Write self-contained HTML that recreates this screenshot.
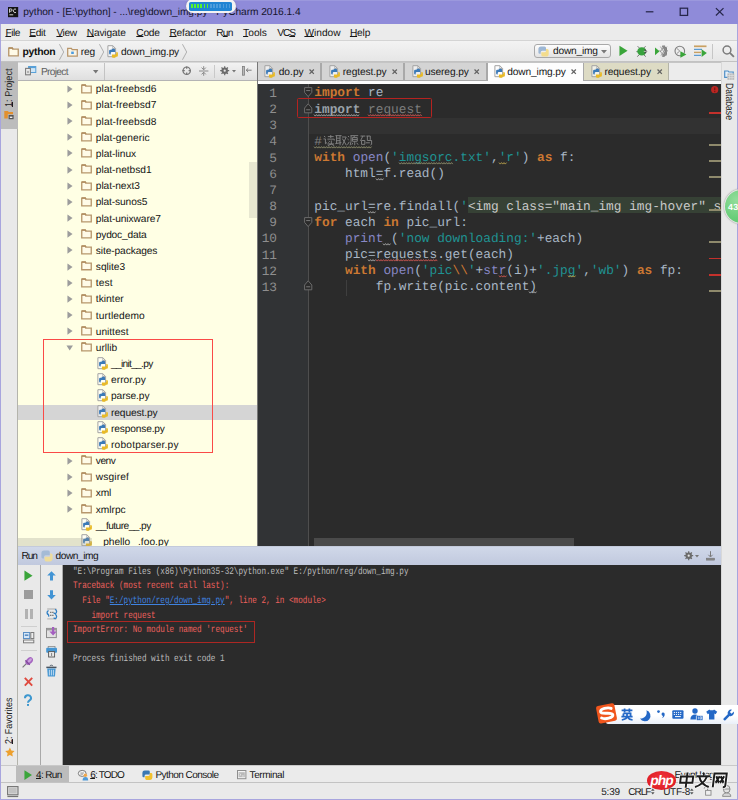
<!DOCTYPE html>
<html>
<head>
<meta charset="utf-8">
<title>python - PyCharm</title>
<style>
*{box-sizing:border-box;margin:0;padding:0}
html,body{width:738px;height:800px;overflow:hidden;background:#8f8bd9}
body{font-family:"Liberation Sans",sans-serif;font-size:10px;position:relative;text-rendering:geometricPrecision}
.x{position:absolute;white-space:pre}
svg.x{overflow:visible}
u{text-decoration-thickness:.8px;text-underline-offset:.4px}
.c{font-family:"Liberation Mono",monospace;font-size:12.8px;line-height:16px;color:#a9b7c6;letter-spacing:-.0002px}
.k{color:#cc7832}.s{color:#1f9393}.g{color:#7d7d7d}.bi{color:#8888c6}
.co{font-family:"Liberation Mono",monospace;font-size:10px;line-height:14px;transform:scaleX(.7658);transform-origin:0 0}
</style>
</head>
<body>
<div class="x" style="left:0px;top:0px;width:738px;height:24px;background:#8f8bd9;border-top:1px solid #9b98dd"></div>
<svg class="x" style="left:7.9px;top:6.7px" width="10.2" height="10.2" viewBox="0 0 16 16"><rect x="0" y="0" width="16" height="16" fill="#141414"/><rect x="2.2" y="11.6" width="6" height="1.4" fill="#e8e8e8"/><path d="M2.4 9V3h2.2a1.7 1.7 0 0 1 0 3.6H2.9" fill="none" stroke="#f0f0f0" stroke-width="1.3"/><path d="M12.6 3.6a2.6 2.9 0 1 0 0 4.8" fill="none" stroke="#f0f0f0" stroke-width="1.3"/></svg>
<span class="x" style="left:23.20px;top:6.41px;font-size:10.2px;line-height:14px;color:#15152c;letter-spacing:-0.049px">python - [E:\python] - ...\reg\down_img.py - PyCharm 2016.1.4</span>
<div class="x" style="left:185.9px;top:-1.2px;width:50.2px;height:14px;background:#f3f3f3;border-radius:7px;box-shadow:0 0 1.5px rgba(90,90,120,.55)"></div>
<div class="x" style="left:189px;top:1.9px;width:43.2px;height:8.7px;background:#2085d3;border-radius:1.8px"></div>
<div class="x" style="left:191.2px;top:4.2px;width:17.2px;height:4.2px;background:repeating-linear-gradient(90deg,#56f22c 0,#56f22c 1.5px,rgba(0,0,0,0) 1.5px,rgba(0,0,0,0) 3.13px)"></div>
<div class="x" style="left:210px;top:4.2px;width:20.6px;height:4.2px;background:repeating-linear-gradient(90deg,rgba(255,255,255,.2) 0,rgba(255,255,255,.2) 1.5px,rgba(0,0,0,0) 1.5px,rgba(0,0,0,0) 3.13px)"></div>
<svg class="x" style="left:643px;top:5px" width="90" height="14"><path d="M2.800 6.800h7.600" stroke="#26264a" stroke-width="1.250"/><rect x="37.200" y="3.200" width="7.400" height="7.200" fill="none" stroke="#26264a" stroke-width="1.250"/><path d="M72.900 3.100l7.600 7.400M80.500 3.100l-7.600 7.400" stroke="#26264a" stroke-width="1.200"/></svg>
<div class="x" style="left:1px;top:24px;width:736px;height:17px;background:#ebebeb;border-bottom:1px solid #d4d4d4"></div>
<span class="x" style="left:5.40px;top:26.71px;font-size:10.2px;line-height:14px;color:#161616;letter-spacing:-0.475px"><u>F</u>ile</span>
<span class="x" style="left:29.30px;top:26.71px;font-size:10.2px;line-height:14px;color:#161616;letter-spacing:-0.325px"><u>E</u>dit</span>
<span class="x" style="left:56.40px;top:26.71px;font-size:10.2px;line-height:14px;color:#161616;letter-spacing:-0.425px"><u>V</u>iew</span>
<span class="x" style="left:86.70px;top:26.71px;font-size:10.2px;line-height:14px;color:#161616;letter-spacing:-0.150px"><u>N</u>avigate</span>
<span class="x" style="left:136.30px;top:26.71px;font-size:10.2px;line-height:14px;color:#161616;letter-spacing:-0.250px"><u>C</u>ode</span>
<span class="x" style="left:169.40px;top:26.71px;font-size:10.2px;line-height:14px;color:#161616;letter-spacing:-0.200px"><u>R</u>efactor</span>
<span class="x" style="left:216.30px;top:26.71px;font-size:10.2px;line-height:14px;color:#161616;letter-spacing:-0.833px">R<u>u</u>n</span>
<span class="x" style="left:243.10px;top:26.71px;font-size:10.2px;line-height:14px;color:#161616;letter-spacing:0.020px"><u>T</u>ools</span>
<span class="x" style="left:277.30px;top:26.71px;font-size:10.2px;line-height:14px;color:#161616;letter-spacing:-1.067px">VC<u>S</u></span>
<span class="x" style="left:304.40px;top:26.71px;font-size:10.2px;line-height:14px;color:#161616"><u>W</u>indow</span>
<span class="x" style="left:349.90px;top:26.71px;font-size:10.2px;line-height:14px;color:#161616;letter-spacing:-0.175px"><u>H</u>elp</span>
<div class="x" style="left:1px;top:41px;width:736px;height:21px;background:linear-gradient(#f3f3f3,#e6e6e6);border-bottom:1px solid #c2c2c2"></div>
<svg class="x" style="left:8px;top:46.6px" width="11" height="10" viewBox="0 0 11 10"><path d="M.75 1.100h3.500l.7 1h5.300v6.700H.75z" fill="#fffbe8" stroke="#b7976c" stroke-width="1.350"/><path d="M.75 1.100h3.500l.7 1" fill="none" stroke="#b08c5e" stroke-width="1.500"/></svg>
<span class="x" style="left:22.60px;top:46.00px;font-size:10.4px;line-height:14px;color:#111;font-weight:bold;letter-spacing:-0.333px">python</span>
<svg class="x" style="left:58.5px;top:42.5px" width="5.5" height="18" viewBox="0 0 6 18"><path d="M.5 .5l4.6 8.5-4.6 8.5" stroke="#a9a9a9" stroke-width="1" fill="none"/></svg>
<svg class="x" style="left:66.6px;top:46.6px" width="11" height="10" viewBox="0 0 11 10"><path d="M0.7 1.3h3.7l0.8 1.2h5.1v6.6h-9.6z" fill="#f7f3e6" stroke="#b8956a" stroke-width="1.25"/><rect x="4.2" y="4.6" width="2.6" height="2.4" fill="#4a9be0"/></svg>
<span class="x" style="left:80.80px;top:46.01px;font-size:10.2px;line-height:14px;color:#161616;letter-spacing:-0.133px">reg</span>
<svg class="x" style="left:99px;top:42.5px" width="5.5" height="18" viewBox="0 0 6 18"><path d="M.5 .5l4.6 8.5-4.6 8.5" stroke="#a9a9a9" stroke-width="1" fill="none"/></svg>
<svg class="x" style="left:106.8px;top:45px" width="12" height="13" viewBox="0 0 12 13"><path d="M.9 .7h4.900l2.800 2.800v8.200H.9z" fill="rgba(255,255,255,.6)" stroke="#a3a3a3" stroke-width="1"/><path d="M5.800 .7v2.800h2.800" fill="none" stroke="#a3a3a3" stroke-width=".8"/><g transform="translate(.1 1)"><path d="M4.600 2.800h2.200a1.200 1.200 0 0 1 1.200 1.200v2h-3.200a1.200 1.200 0 0 0-1.200 1.200v1.200h-.4a1.200 1.200 0 0 1-1.200-1.200v-2.200a1.200 1.200 0 0 1 1.200-1.200h1.400z" fill="#3b7ab8"/><path d="M8.200 11.700h-2.200a1.200 1.200 0 0 1-1.200-1.200v-2h3.200a1.200 1.200 0 0 0 1.200-1.200V6.100h.4a1.200 1.200 0 0 1 1.200 1.200v2.200a1.200 1.200 0 0 1-1.200 1.200H8.200z" fill="#e9ba25"/></g></svg>
<span class="x" style="left:121.00px;top:46.01px;font-size:10.2px;line-height:14px;color:#161616;letter-spacing:-0.182px">down_img.py</span>
<svg class="x" style="left:181.5px;top:42.5px" width="5.5" height="18" viewBox="0 0 6 18"><path d="M.5 .5l4.6 8.5-4.6 8.5" stroke="#a9a9a9" stroke-width="1" fill="none"/></svg>
<div class="x" style="left:534.3px;top:44.3px;width:77.2px;height:13.8px;background:linear-gradient(#fdfdfd,#e3e3e3);border:1px solid #a9a9a9;border-radius:3px"></div>
<svg class="x" style="left:538.4px;top:45.8px" width="11" height="11"><path d="M3.300 .5h3.200a1.500 1.500 0 0 1 1.500 1.500v2.700H4.200a1.500 1.500 0 0 0-1.500 1.500v1.500H1.700A1.300 1.300 0 0 1 .4 6.400V3.100A2.600 2.600 0 0 1 3 .5z" fill="#9db7d4"/><path d="M8 3.100h1.200a1.500 1.500 0 0 1 1.500 1.500v3.300a2.600 2.600 0 0 1-2.600 2.600H4.800a1.500 1.500 0 0 1-1.500-1.500V6.300h3.200A1.500 1.500 0 0 0 8 4.800z" fill="#f3dc8c"/></svg>
<span class="x" style="left:553.00px;top:45.41px;font-size:10.2px;line-height:14px;color:#161616;letter-spacing:-0.225px">down_img</span>
<svg class="x" style="left:601.2px;top:49.6px" width="6" height="4"><path d="M0 0h6l-3 3.6z" fill="#7a7a7a"/></svg>
<svg class="x" style="left:618.6px;top:45.2px" width="9" height="11.6" viewBox="0 0 10 12"><path d="M.5 .3l9 5.7-9 5.7z" fill="#3aa53a"/></svg>
<svg class="x" style="left:635.5px;top:44.5px" width="13" height="13"><path d="M1.600 1.200l2.400 2.400M9.600 1.200L7.200 3.600M.4 6.600h2M1.200 11.600l2.400-2.200M9.800 11.600L7.400 9.400" stroke="#555" stroke-width=".8"/><ellipse cx="5.800" cy="6.400" rx="4.500" ry="4.200" fill="#38a23e"/><path d="M8.600 3.800l2.800 2.600-2.800 2.600z" fill="#444"/><path d="M7.800 6.400h3" stroke="#e6e6e6" stroke-width=".7"/></svg>
<svg class="x" style="left:654.4px;top:44.8px" width="13.5" height="12.6"><path d="M1 2.400l4.600 3.900L1 10.200z" fill="#3aa53a"/><path d="M7.800 1l2.200-.6 3 2.600v6.400l-3 2.600-2.200-.6 3-5.100z" fill="#7f7f7f"/><path d="M6.400 1.600l6 9M8.800 .4l4.400 6.600M5.600 5l4.400 6.600M13 1.600l-6 9M10.600 .4L6.200 7M13.600 5l-4.400 6.600" stroke="#8d8d8d" stroke-width=".8"/></svg>
<svg class="x" style="left:674.4px;top:44.6px" width="13" height="13"><circle cx="5.800" cy="6" r="4.800" fill="#ededed" stroke="#7f7f7f" stroke-width="1.100"/><path d="M3 3.600l2.800 2.400L3 8.400" stroke="#8a8a8a" stroke-width=".9" fill="none"/><path d="M6.400 6.200l6 3.300-6 3.300z" fill="#3aa53a"/></svg>
<svg class="x" style="left:693.8px;top:45px" width="13.5" height="12.5"><path d="M0 1.300h12.500" stroke="#c9a062" stroke-width="1.700"/><path d="M0 4.400h8M0 10.400h7" stroke="#5b9bd2" stroke-width="1.400"/><path d="M0 7.400h7" stroke="#c9a062" stroke-width="1.400"/><path d="M7.600 4.200l5.200 3.900-5.200 3.900z" fill="#3aa53a"/></svg>
<div class="x" style="left:712.4px;top:44px;width:1px;height:15px;background:#c6c6c6"></div>
<svg class="x" style="left:721.5px;top:44.6px" width="13" height="13"><circle cx="5" cy="5" r="3.9" fill="none" stroke="#7b7b7b" stroke-width="1.5"/><path d="M7.9 7.9l4 4" stroke="#7b7b7b" stroke-width="1.9"/></svg>
<div class="x" style="left:1px;top:62px;width:17px;height:703px;background:#e9e9e9;border-right:1px solid #b4b4ac"></div>
<div class="x" style="left:1px;top:62px;width:16.5px;height:66.5px;background:#bcbcbc"></div>
<span class="x" style="left:3.23px;top:107.30px;font-size:10px;line-height:14px;color:#1c1c1c;transform-origin:0 0;transform:rotate(-90deg) scaleX(0.912)"><u>1</u>: Project</span>
<svg class="x" style="left:4.3px;top:110px" width="10" height="9.5"><path d="M.3 1h3.6l.8 1.1h4.3v2.2H3.8v4.2H.3z" fill="#e2902e"/><rect x="4.6" y="5" width="5" height="4.2" fill="#555"/><rect x="5.8" y="6.6" width="2.6" height="1.4" fill="#eee"/></svg>
<span class="x" style="left:3.33px;top:743.80px;font-size:10px;line-height:14px;color:#1c1c1c;transform-origin:0 0;transform:rotate(-90deg) scaleX(0.888)"><u>2</u>: Favorites</span>
<svg class="x" style="left:4.7px;top:747.2px" width="9.8" height="9.8" viewBox="0 0 11 10.500"><path d="M5.5 .3l1.6 3.4 3.7.5-2.7 2.6.7 3.7-3.3-1.8-3.3 1.8.7-3.7L.2 4.2l3.7-.5z" fill="#eda02e"/></svg>
<div class="x" style="left:720.6px;top:62px;width:16.4px;height:703px;background:#e9e9e9;border-left:1px solid #d8d8d8"></div>
<svg class="x" style="left:724px;top:69.6px" width="11" height="10.4"><path d="M.7 1h3.4l.8 1h4.3v5.400H.7z" fill="#e4eef8" stroke="#4f8fc6" stroke-width="1.200"/><rect x="3.400" y="3.400" width="6.800" height="6.400" fill="#b9b9b9"/><path d="M3.400 5.500h6.800M3.400 7.600h6.800M5.700 3.400v6.400M8 3.400v6.400" stroke="#e6e6e6" stroke-width=".6"/></svg>
<span class="x" style="left:735.50px;top:83.30px;font-size:10.5px;line-height:14px;color:#1c1c1c;transform-origin:0 0;transform:rotate(90deg) scaleX(0.822)">Database</span>
<div class="x" style="left:18px;top:62px;width:239px;height:484.4px;background:#ffffe4"></div>
<div class="x" style="left:18px;top:62px;width:239px;height:18.5px;background:linear-gradient(#f2f2f2,#dfdfdf);border-bottom:1px solid #b4b4b4;border-top:1px solid #d9d9d9"></div>
<svg class="x" style="left:25px;top:66px" width="11.5" height="9.5"><rect x="3.6" y=".5" width="7.2" height="6" fill="#cfe6f7" stroke="#58a0d8"/><rect x="3.6" y=".5" width="7.2" height="1.6" fill="#58a0d8"/><rect x=".6" y="2.4" width="4.8" height="6.4" fill="#efefef" stroke="#7d7d7d" stroke-width="1.1"/><rect x="2.4" y="4.8" width="1.2" height="2.4" fill="#8a8a8a"/></svg>
<span class="x" style="left:40.90px;top:65.71px;font-size:10.2px;line-height:14px;color:#5e5e5e;letter-spacing:-0.686px">Project</span>
<svg class="x" style="left:93.3px;top:70px" width="5.4" height="3.6"><path d="M0 0h5.4l-2.7 3.4z" fill="#767676"/></svg>
<div class="x" style="left:104px;top:63px;width:1px;height:17px;background:#c3c3c3"></div>
<svg class="x" style="left:181.6px;top:66.3px" width="9.4" height="9.4"><circle cx="4.7" cy="4.7" r="3.7" fill="none" stroke="#777" stroke-width="1.2"/><path d="M4.7 .4v2.4M4.7 6.6V9M.4 4.7h2.4M6.6 4.7H9" stroke="#777" stroke-width="1.3"/></svg>
<svg class="x" style="left:198.6px;top:66px" width="9.4" height="10"><path d="M0 5h9.4" stroke="#8b8b8b" stroke-width="1"/><path d="M4.7 .2v3.6M4.7 6.2v3.6" stroke="#8b8b8b" stroke-width="1"/><path d="M2.6 1.6l2.1 2.2 2.1-2.2M2.6 8.4l2.1-2.2 2.1 2.2" fill="none" stroke="#8b8b8b" stroke-width="1"/></svg>
<div class="x" style="left:214px;top:65px;width:1px;height:13px;background:#c9c9c9"></div>
<svg class="x" style="left:219.8px;top:66.2px" width="9.4" height="9.4" viewBox="0 0 10 10"><circle cx="5" cy="5" r="2.6" fill="none" stroke="#6b6b6b" stroke-width="1.8"/><path d="M5 .2v9.6M.2 5h9.6M1.6 1.6l6.8 6.8M8.4 1.6l-6.8 6.8" stroke="#6b6b6b" stroke-width="1.3"/><circle cx="5" cy="5" r="1.2" fill="#e6e6e6"/></svg>
<svg class="x" style="left:231.6px;top:70.4px" width="4" height="2.6"><path d="M0 0h4l-2 2.4z" fill="#767676"/></svg>
<svg class="x" style="left:241.8px;top:66.2px" width="10" height="9.6"><rect x=".4" y=".4" width="2" height="8.8" fill="#b9b9b9" stroke="#7d7d7d" stroke-width=".8"/><path d="M4.2 4.2h5.4M4.2 4.2l2-1.8M4.2 4.2l2 1.8" stroke="#7d7d7d" stroke-width="1" fill="none"/></svg>
<div class="x" style="left:18px;top:404.7px;width:239px;height:15.3px;background:#d5d5d5"></div>
<svg class="x" style="left:66.5px;top:84.75px" width="6.4" height="8.2" viewBox="0 0 6 8"><path d="M.3 .5l5 3.500-5 3.500z" fill="#9c9c9c"/></svg>
<svg class="x" style="left:81.2px;top:83.55px" width="11" height="10" viewBox="0 0 11 10"><path d="M.75 1.100h3.500l.7 1h5.300v6.700H.75z" fill="#fffbe8" stroke="#b7976c" stroke-width="1.350"/><path d="M.75 1.100h3.500l.7 1" fill="none" stroke="#b08c5e" stroke-width="1.500"/></svg>
<span class="x" style="left:95.80px;top:83.26px;font-size:10.2px;line-height:14px;color:#141414;letter-spacing:0.100px">plat-freebsd6</span>
<svg class="x" style="left:66.5px;top:100.915px" width="6.4" height="8.2" viewBox="0 0 6 8"><path d="M.3 .5l5 3.500-5 3.500z" fill="#9c9c9c"/></svg>
<svg class="x" style="left:81.2px;top:99.715px" width="11" height="10" viewBox="0 0 11 10"><path d="M.75 1.100h3.500l.7 1h5.300v6.700H.75z" fill="#fffbe8" stroke="#b7976c" stroke-width="1.350"/><path d="M.75 1.100h3.500l.7 1" fill="none" stroke="#b08c5e" stroke-width="1.500"/></svg>
<span class="x" style="left:95.80px;top:99.43px;font-size:10.2px;line-height:14px;color:#141414;letter-spacing:0.100px">plat-freebsd7</span>
<svg class="x" style="left:66.5px;top:117.08px" width="6.4" height="8.2" viewBox="0 0 6 8"><path d="M.3 .5l5 3.500-5 3.500z" fill="#9c9c9c"/></svg>
<svg class="x" style="left:81.2px;top:115.88px" width="11" height="10" viewBox="0 0 11 10"><path d="M.75 1.100h3.500l.7 1h5.300v6.700H.75z" fill="#fffbe8" stroke="#b7976c" stroke-width="1.350"/><path d="M.75 1.100h3.500l.7 1" fill="none" stroke="#b08c5e" stroke-width="1.500"/></svg>
<span class="x" style="left:95.80px;top:115.59px;font-size:10.2px;line-height:14px;color:#141414;letter-spacing:0.100px">plat-freebsd8</span>
<svg class="x" style="left:66.5px;top:133.245px" width="6.4" height="8.2" viewBox="0 0 6 8"><path d="M.3 .5l5 3.500-5 3.500z" fill="#9c9c9c"/></svg>
<svg class="x" style="left:81.2px;top:132.045px" width="11" height="10" viewBox="0 0 11 10"><path d="M.75 1.100h3.500l.7 1h5.300v6.700H.75z" fill="#fffbe8" stroke="#b7976c" stroke-width="1.350"/><path d="M.75 1.100h3.500l.7 1" fill="none" stroke="#b08c5e" stroke-width="1.500"/></svg>
<span class="x" style="left:95.80px;top:131.76px;font-size:10.2px;line-height:14px;color:#141414;letter-spacing:0.050px">plat-generic</span>
<svg class="x" style="left:66.5px;top:149.41px" width="6.4" height="8.2" viewBox="0 0 6 8"><path d="M.3 .5l5 3.500-5 3.500z" fill="#9c9c9c"/></svg>
<svg class="x" style="left:81.2px;top:148.21px" width="11" height="10" viewBox="0 0 11 10"><path d="M.75 1.100h3.500l.7 1h5.300v6.700H.75z" fill="#fffbe8" stroke="#b7976c" stroke-width="1.350"/><path d="M.75 1.100h3.500l.7 1" fill="none" stroke="#b08c5e" stroke-width="1.500"/></svg>
<span class="x" style="left:95.80px;top:147.92px;font-size:10.2px;line-height:14px;color:#141414;letter-spacing:-0.050px">plat-linux</span>
<svg class="x" style="left:66.5px;top:165.575px" width="6.4" height="8.2" viewBox="0 0 6 8"><path d="M.3 .5l5 3.500-5 3.500z" fill="#9c9c9c"/></svg>
<svg class="x" style="left:81.2px;top:164.375px" width="11" height="10" viewBox="0 0 11 10"><path d="M.75 1.100h3.500l.7 1h5.300v6.700H.75z" fill="#fffbe8" stroke="#b7976c" stroke-width="1.350"/><path d="M.75 1.100h3.500l.7 1" fill="none" stroke="#b08c5e" stroke-width="1.500"/></svg>
<span class="x" style="left:95.80px;top:164.09px;font-size:10.2px;line-height:14px;color:#141414;letter-spacing:-0.025px">plat-netbsd1</span>
<svg class="x" style="left:66.5px;top:181.74px" width="6.4" height="8.2" viewBox="0 0 6 8"><path d="M.3 .5l5 3.500-5 3.500z" fill="#9c9c9c"/></svg>
<svg class="x" style="left:81.2px;top:180.54px" width="11" height="10" viewBox="0 0 11 10"><path d="M.75 1.100h3.500l.7 1h5.300v6.700H.75z" fill="#fffbe8" stroke="#b7976c" stroke-width="1.350"/><path d="M.75 1.100h3.500l.7 1" fill="none" stroke="#b08c5e" stroke-width="1.500"/></svg>
<span class="x" style="left:95.80px;top:180.25px;font-size:10.2px;line-height:14px;color:#141414;letter-spacing:-0.080px">plat-next3</span>
<svg class="x" style="left:66.5px;top:197.905px" width="6.4" height="8.2" viewBox="0 0 6 8"><path d="M.3 .5l5 3.500-5 3.500z" fill="#9c9c9c"/></svg>
<svg class="x" style="left:81.2px;top:196.705px" width="11" height="10" viewBox="0 0 11 10"><path d="M.75 1.100h3.500l.7 1h5.300v6.700H.75z" fill="#fffbe8" stroke="#b7976c" stroke-width="1.350"/><path d="M.75 1.100h3.500l.7 1" fill="none" stroke="#b08c5e" stroke-width="1.500"/></svg>
<span class="x" style="left:95.80px;top:196.42px;font-size:10.2px;line-height:14px;color:#141414;letter-spacing:-0.109px">plat-sunos5</span>
<svg class="x" style="left:66.5px;top:214.07px" width="6.4" height="8.2" viewBox="0 0 6 8"><path d="M.3 .5l5 3.500-5 3.500z" fill="#9c9c9c"/></svg>
<svg class="x" style="left:81.2px;top:212.87px" width="11" height="10" viewBox="0 0 11 10"><path d="M.75 1.100h3.500l.7 1h5.300v6.700H.75z" fill="#fffbe8" stroke="#b7976c" stroke-width="1.350"/><path d="M.75 1.100h3.500l.7 1" fill="none" stroke="#b08c5e" stroke-width="1.500"/></svg>
<span class="x" style="left:95.80px;top:212.58px;font-size:10.2px;line-height:14px;color:#141414;letter-spacing:-0.086px">plat-unixware7</span>
<svg class="x" style="left:66.5px;top:230.235px" width="6.4" height="8.2" viewBox="0 0 6 8"><path d="M.3 .5l5 3.500-5 3.500z" fill="#9c9c9c"/></svg>
<svg class="x" style="left:81.2px;top:229.035px" width="11" height="10" viewBox="0 0 11 10"><path d="M.75 1.100h3.500l.7 1h5.300v6.700H.75z" fill="#fffbe8" stroke="#b7976c" stroke-width="1.350"/><path d="M.75 1.100h3.500l.7 1" fill="none" stroke="#b08c5e" stroke-width="1.500"/></svg>
<span class="x" style="left:95.80px;top:228.75px;font-size:10.2px;line-height:14px;color:#141414;letter-spacing:-0.200px">pydoc_data</span>
<svg class="x" style="left:66.5px;top:246.4px" width="6.4" height="8.2" viewBox="0 0 6 8"><path d="M.3 .5l5 3.500-5 3.500z" fill="#9c9c9c"/></svg>
<svg class="x" style="left:81.2px;top:245.2px" width="11" height="10" viewBox="0 0 11 10"><path d="M.75 1.100h3.500l.7 1h5.300v6.700H.75z" fill="#fffbe8" stroke="#b7976c" stroke-width="1.350"/><path d="M.75 1.100h3.500l.7 1" fill="none" stroke="#b08c5e" stroke-width="1.500"/></svg>
<span class="x" style="left:95.80px;top:244.91px;font-size:10.2px;line-height:14px;color:#141414;letter-spacing:-0.100px">site-packages</span>
<svg class="x" style="left:66.5px;top:262.565px" width="6.4" height="8.2" viewBox="0 0 6 8"><path d="M.3 .5l5 3.500-5 3.500z" fill="#9c9c9c"/></svg>
<svg class="x" style="left:81.2px;top:261.365px" width="11" height="10" viewBox="0 0 11 10"><path d="M.75 1.100h3.500l.7 1h5.300v6.700H.75z" fill="#fffbe8" stroke="#b7976c" stroke-width="1.350"/><path d="M.75 1.100h3.500l.7 1" fill="none" stroke="#b08c5e" stroke-width="1.500"/></svg>
<span class="x" style="left:95.80px;top:261.08px;font-size:10.2px;line-height:14px;color:#141414;letter-spacing:-0.014px">sqlite3</span>
<svg class="x" style="left:66.5px;top:278.73px" width="6.4" height="8.2" viewBox="0 0 6 8"><path d="M.3 .5l5 3.500-5 3.500z" fill="#9c9c9c"/></svg>
<svg class="x" style="left:81.2px;top:277.53px" width="11" height="10" viewBox="0 0 11 10"><path d="M.75 1.100h3.500l.7 1h5.300v6.700H.75z" fill="#fffbe8" stroke="#b7976c" stroke-width="1.350"/><path d="M.75 1.100h3.500l.7 1" fill="none" stroke="#b08c5e" stroke-width="1.500"/></svg>
<span class="x" style="left:95.80px;top:277.24px;font-size:10.2px;line-height:14px;color:#141414;letter-spacing:0.125px">test</span>
<svg class="x" style="left:66.5px;top:294.895px" width="6.4" height="8.2" viewBox="0 0 6 8"><path d="M.3 .5l5 3.500-5 3.500z" fill="#9c9c9c"/></svg>
<svg class="x" style="left:81.2px;top:293.695px" width="11" height="10" viewBox="0 0 11 10"><path d="M.75 1.100h3.500l.7 1h5.300v6.700H.75z" fill="#fffbe8" stroke="#b7976c" stroke-width="1.350"/><path d="M.75 1.100h3.500l.7 1" fill="none" stroke="#b08c5e" stroke-width="1.500"/></svg>
<span class="x" style="left:95.80px;top:293.41px;font-size:10.2px;line-height:14px;color:#141414;letter-spacing:0.029px">tkinter</span>
<svg class="x" style="left:66.5px;top:311.06px" width="6.4" height="8.2" viewBox="0 0 6 8"><path d="M.3 .5l5 3.500-5 3.500z" fill="#9c9c9c"/></svg>
<svg class="x" style="left:81.2px;top:309.86px" width="11" height="10" viewBox="0 0 11 10"><path d="M.75 1.100h3.500l.7 1h5.300v6.700H.75z" fill="#fffbe8" stroke="#b7976c" stroke-width="1.350"/><path d="M.75 1.100h3.500l.7 1" fill="none" stroke="#b08c5e" stroke-width="1.500"/></svg>
<span class="x" style="left:95.80px;top:309.57px;font-size:10.2px;line-height:14px;color:#141414;letter-spacing:0.090px">turtledemo</span>
<svg class="x" style="left:66.5px;top:327.225px" width="6.4" height="8.2" viewBox="0 0 6 8"><path d="M.3 .5l5 3.500-5 3.500z" fill="#9c9c9c"/></svg>
<svg class="x" style="left:81.2px;top:326.025px" width="11" height="10" viewBox="0 0 11 10"><path d="M.75 1.100h3.500l.7 1h5.300v6.700H.75z" fill="#fffbe8" stroke="#b7976c" stroke-width="1.350"/><path d="M.75 1.100h3.500l.7 1" fill="none" stroke="#b08c5e" stroke-width="1.500"/></svg>
<span class="x" style="left:95.80px;top:325.74px;font-size:10.2px;line-height:14px;color:#141414;letter-spacing:-0.025px">unittest</span>
<svg class="x" style="left:66.2px;top:344.79px" width="7.4" height="6.2" viewBox="0 0 8 6"><path d="M.5 .3h7l-3.500 5.400z" fill="#9c9c9c"/></svg>
<svg class="x" style="left:81.2px;top:342.19px" width="11" height="10" viewBox="0 0 11 10"><path d="M.75 1.100h3.500l.7 1h5.300v6.700H.75z" fill="#fffbe8" stroke="#b7976c" stroke-width="1.350"/><path d="M.75 1.100h3.500l.7 1" fill="none" stroke="#b08c5e" stroke-width="1.500"/></svg>
<span class="x" style="left:95.80px;top:341.90px;font-size:10.2px;line-height:14px;color:#141414;letter-spacing:-0.033px">urllib</span>
<svg class="x" style="left:96.6px;top:356.655px" width="12" height="13" viewBox="0 0 12 13"><path d="M.9 .7h4.900l2.800 2.800v8.200H.9z" fill="rgba(255,255,255,.6)" stroke="#a3a3a3" stroke-width="1"/><path d="M5.800 .7v2.800h2.800" fill="none" stroke="#a3a3a3" stroke-width=".8"/><g transform="translate(.1 1)"><path d="M4.600 2.800h2.200a1.200 1.200 0 0 1 1.200 1.200v2h-3.200a1.200 1.200 0 0 0-1.200 1.200v1.200h-.4a1.200 1.200 0 0 1-1.200-1.200v-2.200a1.200 1.200 0 0 1 1.200-1.200h1.400z" fill="#3b7ab8"/><path d="M8.200 11.700h-2.200a1.200 1.200 0 0 1-1.200-1.200v-2h3.200a1.200 1.200 0 0 0 1.200-1.200V6.100h.4a1.200 1.200 0 0 1 1.200 1.200v2.200a1.200 1.200 0 0 1-1.200 1.200H8.200z" fill="#e9ba25"/></g></svg>
<span class="x" style="left:111.00px;top:358.07px;font-size:10.2px;line-height:14px;color:#141414;letter-spacing:-0.700px">__init__.py</span>
<svg class="x" style="left:96.6px;top:372.82px" width="12" height="13" viewBox="0 0 12 13"><path d="M.9 .7h4.900l2.800 2.800v8.200H.9z" fill="rgba(255,255,255,.6)" stroke="#a3a3a3" stroke-width="1"/><path d="M5.800 .7v2.800h2.800" fill="none" stroke="#a3a3a3" stroke-width=".8"/><g transform="translate(.1 1)"><path d="M4.600 2.800h2.200a1.200 1.200 0 0 1 1.200 1.200v2h-3.200a1.200 1.200 0 0 0-1.200 1.200v1.200h-.4a1.200 1.200 0 0 1-1.200-1.200v-2.200a1.200 1.200 0 0 1 1.200-1.200h1.400z" fill="#3b7ab8"/><path d="M8.200 11.700h-2.200a1.200 1.200 0 0 1-1.200-1.200v-2h3.200a1.200 1.200 0 0 0 1.200-1.200V6.100h.4a1.200 1.200 0 0 1 1.200 1.200v2.200a1.200 1.200 0 0 1-1.200 1.200H8.200z" fill="#e9ba25"/></g></svg>
<span class="x" style="left:111.00px;top:374.23px;font-size:10.2px;line-height:14px;color:#141414;letter-spacing:0.037px">error.py</span>
<svg class="x" style="left:96.6px;top:388.985px" width="12" height="13" viewBox="0 0 12 13"><path d="M.9 .7h4.900l2.800 2.800v8.200H.9z" fill="rgba(255,255,255,.6)" stroke="#a3a3a3" stroke-width="1"/><path d="M5.800 .7v2.800h2.800" fill="none" stroke="#a3a3a3" stroke-width=".8"/><g transform="translate(.1 1)"><path d="M4.600 2.800h2.200a1.200 1.200 0 0 1 1.200 1.200v2h-3.200a1.200 1.200 0 0 0-1.200 1.200v1.200h-.4a1.200 1.200 0 0 1-1.200-1.200v-2.200a1.200 1.200 0 0 1 1.200-1.200h1.400z" fill="#3b7ab8"/><path d="M8.200 11.700h-2.200a1.200 1.200 0 0 1-1.200-1.200v-2h3.200a1.200 1.200 0 0 0 1.200-1.200V6.100h.4a1.200 1.200 0 0 1 1.200 1.200v2.200a1.200 1.200 0 0 1-1.200 1.200H8.200z" fill="#e9ba25"/></g></svg>
<span class="x" style="left:111.00px;top:390.40px;font-size:10.2px;line-height:14px;color:#141414;letter-spacing:-0.075px">parse.py</span>
<svg class="x" style="left:96.6px;top:405.15px" width="12" height="13" viewBox="0 0 12 13"><path d="M.9 .7h4.900l2.800 2.800v8.200H.9z" fill="rgba(255,255,255,.6)" stroke="#a3a3a3" stroke-width="1"/><path d="M5.800 .7v2.800h2.800" fill="none" stroke="#a3a3a3" stroke-width=".8"/><g transform="translate(.1 1)"><path d="M4.600 2.800h2.200a1.200 1.200 0 0 1 1.200 1.200v2h-3.200a1.200 1.200 0 0 0-1.200 1.200v1.200h-.4a1.200 1.200 0 0 1-1.200-1.200v-2.200a1.200 1.200 0 0 1 1.200-1.200h1.400z" fill="#3b7ab8"/><path d="M8.200 11.700h-2.200a1.200 1.200 0 0 1-1.200-1.200v-2h3.200a1.200 1.200 0 0 0 1.200-1.200V6.100h.4a1.200 1.200 0 0 1 1.200 1.200v2.200a1.200 1.200 0 0 1-1.200 1.200H8.200z" fill="#e9ba25"/></g></svg>
<span class="x" style="left:111.00px;top:406.56px;font-size:10.2px;line-height:14px;color:#141414;letter-spacing:-0.110px">request.py</span>
<svg class="x" style="left:96.6px;top:421.315px" width="12" height="13" viewBox="0 0 12 13"><path d="M.9 .7h4.900l2.800 2.800v8.200H.9z" fill="rgba(255,255,255,.6)" stroke="#a3a3a3" stroke-width="1"/><path d="M5.800 .7v2.800h2.800" fill="none" stroke="#a3a3a3" stroke-width=".8"/><g transform="translate(.1 1)"><path d="M4.600 2.800h2.200a1.200 1.200 0 0 1 1.200 1.200v2h-3.200a1.200 1.200 0 0 0-1.200 1.200v1.200h-.4a1.200 1.200 0 0 1-1.200-1.200v-2.200a1.200 1.200 0 0 1 1.200-1.200h1.400z" fill="#3b7ab8"/><path d="M8.200 11.700h-2.200a1.200 1.200 0 0 1-1.200-1.200v-2h3.200a1.200 1.200 0 0 0 1.200-1.200V6.100h.4a1.200 1.200 0 0 1 1.200 1.200v2.200a1.200 1.200 0 0 1-1.200 1.200H8.200z" fill="#e9ba25"/></g></svg>
<span class="x" style="left:111.00px;top:422.73px;font-size:10.2px;line-height:14px;color:#141414;letter-spacing:-0.155px">response.py</span>
<svg class="x" style="left:96.6px;top:437.48px" width="12" height="13" viewBox="0 0 12 13"><path d="M.9 .7h4.900l2.800 2.800v8.200H.9z" fill="rgba(255,255,255,.6)" stroke="#a3a3a3" stroke-width="1"/><path d="M5.800 .7v2.800h2.800" fill="none" stroke="#a3a3a3" stroke-width=".8"/><g transform="translate(.1 1)"><path d="M4.600 2.800h2.200a1.200 1.200 0 0 1 1.200 1.200v2h-3.200a1.200 1.200 0 0 0-1.200 1.200v1.200h-.4a1.200 1.200 0 0 1-1.200-1.200v-2.200a1.200 1.200 0 0 1 1.200-1.200h1.400z" fill="#3b7ab8"/><path d="M8.200 11.700h-2.200a1.200 1.200 0 0 1-1.200-1.200v-2h3.200a1.200 1.200 0 0 0 1.200-1.200V6.100h.4a1.200 1.200 0 0 1 1.200 1.200v2.200a1.200 1.200 0 0 1-1.200 1.200H8.200z" fill="#e9ba25"/></g></svg>
<span class="x" style="left:111.00px;top:438.89px;font-size:10.2px;line-height:14px;color:#141414;letter-spacing:0.186px">robotparser.py</span>
<svg class="x" style="left:66.5px;top:456.545px" width="6.4" height="8.2" viewBox="0 0 6 8"><path d="M.3 .5l5 3.500-5 3.500z" fill="#9c9c9c"/></svg>
<svg class="x" style="left:81.2px;top:455.345px" width="11" height="10" viewBox="0 0 11 10"><path d="M.75 1.100h3.500l.7 1h5.300v6.700H.75z" fill="#fffbe8" stroke="#b7976c" stroke-width="1.350"/><path d="M.75 1.100h3.500l.7 1" fill="none" stroke="#b08c5e" stroke-width="1.500"/></svg>
<span class="x" style="left:95.80px;top:455.06px;font-size:10.2px;line-height:14px;color:#141414;letter-spacing:-0.475px">venv</span>
<svg class="x" style="left:66.5px;top:472.71px" width="6.4" height="8.2" viewBox="0 0 6 8"><path d="M.3 .5l5 3.500-5 3.500z" fill="#9c9c9c"/></svg>
<svg class="x" style="left:81.2px;top:471.51px" width="11" height="10" viewBox="0 0 11 10"><path d="M.75 1.100h3.500l.7 1h5.300v6.700H.75z" fill="#fffbe8" stroke="#b7976c" stroke-width="1.350"/><path d="M.75 1.100h3.500l.7 1" fill="none" stroke="#b08c5e" stroke-width="1.500"/></svg>
<span class="x" style="left:95.80px;top:471.22px;font-size:10.2px;line-height:14px;color:#141414;letter-spacing:0.114px">wsgiref</span>
<svg class="x" style="left:66.5px;top:488.875px" width="6.4" height="8.2" viewBox="0 0 6 8"><path d="M.3 .5l5 3.500-5 3.500z" fill="#9c9c9c"/></svg>
<svg class="x" style="left:81.2px;top:487.675px" width="11" height="10" viewBox="0 0 11 10"><path d="M.75 1.100h3.500l.7 1h5.300v6.700H.75z" fill="#fffbe8" stroke="#b7976c" stroke-width="1.350"/><path d="M.75 1.100h3.500l.7 1" fill="none" stroke="#b08c5e" stroke-width="1.500"/></svg>
<span class="x" style="left:95.80px;top:487.39px;font-size:10.2px;line-height:14px;color:#141414;letter-spacing:-0.167px">xml</span>
<svg class="x" style="left:66.5px;top:505.04px" width="6.4" height="8.2" viewBox="0 0 6 8"><path d="M.3 .5l5 3.500-5 3.500z" fill="#9c9c9c"/></svg>
<svg class="x" style="left:81.2px;top:503.84px" width="11" height="10" viewBox="0 0 11 10"><path d="M.75 1.100h3.500l.7 1h5.300v6.700H.75z" fill="#fffbe8" stroke="#b7976c" stroke-width="1.350"/><path d="M.75 1.100h3.500l.7 1" fill="none" stroke="#b08c5e" stroke-width="1.500"/></svg>
<span class="x" style="left:95.80px;top:503.55px;font-size:10.2px;line-height:14px;color:#141414;letter-spacing:-0.017px">xmlrpc</span>
<svg class="x" style="left:80.8px;top:518.305px" width="12" height="13" viewBox="0 0 12 13"><path d="M.9 .7h4.900l2.800 2.800v8.200H.9z" fill="rgba(255,255,255,.6)" stroke="#a3a3a3" stroke-width="1"/><path d="M5.800 .7v2.800h2.800" fill="none" stroke="#a3a3a3" stroke-width=".8"/><g transform="translate(.1 1)"><path d="M4.600 2.800h2.200a1.200 1.200 0 0 1 1.200 1.200v2h-3.200a1.200 1.200 0 0 0-1.200 1.200v1.200h-.4a1.200 1.200 0 0 1-1.200-1.200v-2.200a1.200 1.200 0 0 1 1.200-1.200h1.400z" fill="#3b7ab8"/><path d="M8.200 11.700h-2.200a1.200 1.200 0 0 1-1.200-1.200v-2h3.200a1.200 1.200 0 0 0 1.200-1.200V6.100h.4a1.200 1.200 0 0 1 1.200 1.200v2.200a1.200 1.200 0 0 1-1.200 1.200H8.200z" fill="#e9ba25"/></g></svg>
<span class="x" style="left:95.80px;top:519.72px;font-size:10.2px;line-height:14px;color:#141414;letter-spacing:-0.569px">__future__.py</span>
<svg class="x" style="left:80.8px;top:534.47px" width="12" height="13" viewBox="0 0 12 13"><path d="M.9 .7h4.900l2.800 2.800v8.200H.9z" fill="rgba(255,255,255,.6)" stroke="#a3a3a3" stroke-width="1"/><path d="M5.800 .7v2.800h2.800" fill="none" stroke="#a3a3a3" stroke-width=".8"/><g transform="translate(.1 1)"><path d="M4.600 2.800h2.200a1.200 1.200 0 0 1 1.200 1.200v2h-3.200a1.200 1.200 0 0 0-1.200 1.200v1.200h-.4a1.200 1.200 0 0 1-1.200-1.200v-2.200a1.200 1.200 0 0 1 1.200-1.200h1.400z" fill="#3b7ab8"/><path d="M8.200 11.700h-2.200a1.200 1.200 0 0 1-1.200-1.200v-2h3.200a1.200 1.200 0 0 0 1.200-1.200V6.100h.4a1.200 1.200 0 0 1 1.200 1.200v2.200a1.200 1.200 0 0 1-1.200 1.200H8.200z" fill="#e9ba25"/></g></svg>
<span class="x" style="left:103.20px;top:535.88px;font-size:10.2px;line-height:14px;color:#141414;letter-spacing:-0.067px">phello</span>
<span class="x" style="left:138.00px;top:535.88px;font-size:10.2px;line-height:14px;color:#141414;letter-spacing:0.029px">.foo.py</span>
<div class="x" style="left:249.3px;top:162px;width:7.7px;height:56px;background:rgba(150,150,140,.22)"></div>
<div class="x" style="left:18px;top:538.3px;width:73.7px;height:8.1px;background:rgba(150,150,140,.28)"></div>
<div class="x" style="left:43px;top:339.1px;width:169.6px;height:114px;border:1px solid #fa4a47"></div>
<div class="x" style="left:257px;top:62px;width:463.6px;height:484.4px;background:#2b2b2b"></div>
<div class="x" style="left:257px;top:62px;width:1px;height:484.4px;background:#777"></div>
<div class="x" style="left:258px;top:62px;width:462.6px;height:18.5px;background:#d4d4d4;border-top:1px solid #c5c5c5;border-bottom:1px solid #a9a9a9"></div>
<div class="x" style="left:320px;top:63px;width:1.7px;height:17px;background:#a9a9a9"></div>
<svg class="x" style="left:264.3px;top:65px" width="12" height="13" viewBox="0 0 12 13"><path d="M.9 .7h4.900l2.800 2.800v8.200H.9z" fill="rgba(255,255,255,.6)" stroke="#a3a3a3" stroke-width="1"/><path d="M5.800 .7v2.800h2.800" fill="none" stroke="#a3a3a3" stroke-width=".8"/><g transform="translate(.1 1)"><path d="M4.600 2.800h2.200a1.200 1.200 0 0 1 1.200 1.200v2h-3.200a1.200 1.200 0 0 0-1.200 1.200v1.200h-.4a1.200 1.200 0 0 1-1.200-1.200v-2.200a1.200 1.200 0 0 1 1.200-1.200h1.400z" fill="#3b7ab8"/><path d="M8.200 11.700h-2.200a1.200 1.200 0 0 1-1.200-1.200v-2h3.200a1.200 1.200 0 0 0 1.200-1.200V6.100h.4a1.200 1.200 0 0 1 1.200 1.200v2.200a1.200 1.200 0 0 1-1.200 1.200H8.200z" fill="#e9ba25"/></g></svg>
<span class="x" style="left:278.70px;top:66.11px;font-size:10.2px;line-height:14px;color:#161616;letter-spacing:0.020px">do.py</span>
<svg class="x" style="left:308.7px;top:69.3px" width="5.4" height="5.4" viewBox="0 0 6 6"><path d="M.6 .6l4.8 4.8M5.4 .6l-4.8 4.8" stroke="#626262" stroke-width="1.400" fill="none"/></svg>
<div class="x" style="left:403px;top:63px;width:1.7px;height:17px;background:#a9a9a9"></div>
<svg class="x" style="left:328.6px;top:65px" width="12" height="13" viewBox="0 0 12 13"><path d="M.9 .7h4.900l2.800 2.800v8.200H.9z" fill="rgba(255,255,255,.6)" stroke="#a3a3a3" stroke-width="1"/><path d="M5.800 .7v2.800h2.800" fill="none" stroke="#a3a3a3" stroke-width=".8"/><g transform="translate(.1 1)"><path d="M4.600 2.800h2.200a1.200 1.200 0 0 1 1.200 1.200v2h-3.200a1.200 1.200 0 0 0-1.200 1.200v1.200h-.4a1.200 1.200 0 0 1-1.200-1.200v-2.200a1.200 1.200 0 0 1 1.200-1.200h1.400z" fill="#3b7ab8"/><path d="M8.200 11.700h-2.200a1.200 1.200 0 0 1-1.200-1.200v-2h3.200a1.200 1.200 0 0 0 1.200-1.200V6.100h.4a1.200 1.200 0 0 1 1.200 1.200v2.200a1.200 1.200 0 0 1-1.200 1.200H8.200z" fill="#e9ba25"/></g></svg>
<span class="x" style="left:342.80px;top:66.11px;font-size:10.2px;line-height:14px;color:#161616;letter-spacing:-0.110px">regtest.py</span>
<svg class="x" style="left:391.6px;top:69.3px" width="5.4" height="5.4" viewBox="0 0 6 6"><path d="M.6 .6l4.8 4.8M5.4 .6l-4.8 4.8" stroke="#626262" stroke-width="1.400" fill="none"/></svg>
<div class="x" style="left:486px;top:63px;width:1.7px;height:17px;background:#a9a9a9"></div>
<svg class="x" style="left:411.6px;top:65px" width="12" height="13" viewBox="0 0 12 13"><path d="M.9 .7h4.900l2.800 2.800v8.200H.9z" fill="rgba(255,255,255,.6)" stroke="#a3a3a3" stroke-width="1"/><path d="M5.800 .7v2.800h2.800" fill="none" stroke="#a3a3a3" stroke-width=".8"/><g transform="translate(.1 1)"><path d="M4.600 2.800h2.200a1.200 1.200 0 0 1 1.200 1.200v2h-3.200a1.200 1.200 0 0 0-1.200 1.200v1.200h-.4a1.200 1.200 0 0 1-1.200-1.200v-2.200a1.200 1.200 0 0 1 1.200-1.200h1.400z" fill="#3b7ab8"/><path d="M8.200 11.700h-2.200a1.200 1.200 0 0 1-1.200-1.200v-2h3.200a1.200 1.200 0 0 0 1.200-1.200V6.100h.4a1.200 1.200 0 0 1 1.200 1.200v2.200a1.200 1.200 0 0 1-1.200 1.200H8.200z" fill="#e9ba25"/></g></svg>
<span class="x" style="left:425.00px;top:66.11px;font-size:10.2px;line-height:14px;color:#161616;letter-spacing:-0.111px">usereg.py</span>
<svg class="x" style="left:473.9px;top:69.3px" width="5.4" height="5.4" viewBox="0 0 6 6"><path d="M.6 .6l4.8 4.8M5.4 .6l-4.8 4.8" stroke="#626262" stroke-width="1.400" fill="none"/></svg>
<div class="x" style="left:487px;top:62.5px;width:97px;height:18.5px;background:#fdfdfd;border-left:1px solid #a9a9a9;border-right:1px solid #a9a9a9"></div>
<svg class="x" style="left:493.6px;top:65px" width="12" height="13" viewBox="0 0 12 13"><path d="M.9 .7h4.900l2.800 2.800v8.200H.9z" fill="rgba(255,255,255,.6)" stroke="#a3a3a3" stroke-width="1"/><path d="M5.800 .7v2.800h2.800" fill="none" stroke="#a3a3a3" stroke-width=".8"/><g transform="translate(.1 1)"><path d="M4.600 2.800h2.200a1.200 1.200 0 0 1 1.200 1.200v2h-3.200a1.200 1.200 0 0 0-1.200 1.200v1.200h-.4a1.200 1.200 0 0 1-1.200-1.200v-2.200a1.200 1.200 0 0 1 1.200-1.200h1.400z" fill="#3b7ab8"/><path d="M8.200 11.700h-2.200a1.200 1.200 0 0 1-1.200-1.200v-2h3.200a1.200 1.200 0 0 0 1.200-1.200V6.100h.4a1.200 1.200 0 0 1 1.200 1.200v2.200a1.200 1.200 0 0 1-1.200 1.200H8.200z" fill="#e9ba25"/></g></svg>
<span class="x" style="left:507.30px;top:66.11px;font-size:10.2px;line-height:14px;color:#161616;letter-spacing:-0.145px">down_img.py</span>
<svg class="x" style="left:570.9px;top:69.3px" width="5.4" height="5.4" viewBox="0 0 6 6"><path d="M.6 .6l4.8 4.8M5.4 .6l-4.8 4.8" stroke="#626262" stroke-width="1.400" fill="none"/></svg>
<div class="x" style="left:584px;top:63px;width:85px;height:17px;background:#dddbc4;border-right:1px solid #b4b4a8"></div>
<svg class="x" style="left:590.6px;top:65px" width="12" height="13" viewBox="0 0 12 13"><path d="M.9 .7h4.900l2.800 2.800v8.200H.9z" fill="rgba(255,255,255,.6)" stroke="#a3a3a3" stroke-width="1"/><path d="M5.800 .7v2.800h2.800" fill="none" stroke="#a3a3a3" stroke-width=".8"/><g transform="translate(.1 1)"><path d="M4.600 2.800h2.200a1.200 1.200 0 0 1 1.200 1.200v2h-3.200a1.200 1.200 0 0 0-1.200 1.200v1.200h-.4a1.200 1.200 0 0 1-1.200-1.200v-2.200a1.200 1.200 0 0 1 1.200-1.200h1.400z" fill="#3b7ab8"/><path d="M8.200 11.700h-2.200a1.200 1.200 0 0 1-1.200-1.200v-2h3.200a1.200 1.200 0 0 0 1.200-1.200V6.100h.4a1.200 1.200 0 0 1 1.200 1.200v2.200a1.200 1.200 0 0 1-1.200 1.200H8.200z" fill="#e9ba25"/></g></svg>
<span class="x" style="left:604.50px;top:66.11px;font-size:10.2px;line-height:14px;color:#161616;letter-spacing:-0.120px">request.py</span>
<svg class="x" style="left:656.6px;top:69.3px" width="5.4" height="5.4" viewBox="0 0 6 6"><path d="M.6 .6l4.8 4.8M5.4 .6l-4.8 4.8" stroke="#626262" stroke-width="1.400" fill="none"/></svg>
<div class="x" style="left:669px;top:63px;width:51.6px;height:17px;background:#ececec"></div>
<div class="x" style="left:258px;top:80.5px;width:462.6px;height:3.6px;background:#fcfcfc"></div>
<div class="x" style="left:258px;top:84px;width:50.3px;height:462.4px;background:#313335"></div>
<div class="x" style="left:308.3px;top:84px;width:1px;height:462.4px;background:#4e4e4e"></div>
<div class="x" style="left:309.3px;top:118.19px;width:411.1px;height:16.2px;background:#323232"></div>
<div class="x" style="left:468.3px;top:197.3px;width:252.3px;height:16.1px;background:#364135"></div>
<span class="x c" style="left:261.00px;top:85.95px;color:#8e8e8e;width:16px;text-align:right">1</span>
<span class="x c" style="left:261.00px;top:102.12px;color:#8e8e8e;width:16px;text-align:right">2</span>
<span class="x c" style="left:261.00px;top:118.29px;color:#8e8e8e;width:16px;text-align:right">3</span>
<span class="x c" style="left:261.00px;top:134.46px;color:#8e8e8e;width:16px;text-align:right">4</span>
<span class="x c" style="left:261.00px;top:150.63px;color:#8e8e8e;width:16px;text-align:right">5</span>
<span class="x c" style="left:261.00px;top:166.80px;color:#8e8e8e;width:16px;text-align:right">6</span>
<span class="x c" style="left:261.00px;top:182.97px;color:#8e8e8e;width:16px;text-align:right">7</span>
<span class="x c" style="left:261.00px;top:199.14px;color:#8e8e8e;width:16px;text-align:right">8</span>
<span class="x c" style="left:261.00px;top:215.31px;color:#8e8e8e;width:16px;text-align:right">9</span>
<span class="x c" style="left:261.00px;top:231.48px;color:#8e8e8e;width:16px;text-align:right">10</span>
<span class="x c" style="left:261.00px;top:247.65px;color:#8e8e8e;width:16px;text-align:right">11</span>
<span class="x c" style="left:261.00px;top:263.82px;color:#8e8e8e;width:16px;text-align:right">12</span>
<span class="x c" style="left:261.00px;top:279.99px;color:#8e8e8e;width:16px;text-align:right">13</span>
<svg class="x" style="left:304.2px;top:87.3px" width="8.4" height="10.4"><path d="M.6 .6h7.200v4.800l-3.600 4.200-3.600-4.200z" fill="#2b2b2b" stroke="#6c6c6c" stroke-width="1"/><path d="M2.200 3.600 h4" stroke="#7a7a7a" stroke-width="1"/></svg>
<svg class="x" style="left:304.2px;top:102.57px" width="8.4" height="10.4"><path d="M.6 9.800h7.200V5l-3.600-4.200L.6 5z" fill="#2b2b2b" stroke="#6c6c6c" stroke-width="1"/><path d="M2.200 6.800 h4" stroke="#7a7a7a" stroke-width="1"/></svg>
<svg class="x" style="left:304.2px;top:216.66px" width="8.4" height="10.4"><path d="M.6 .6h7.200v4.800l-3.600 4.200-3.600-4.200z" fill="#2b2b2b" stroke="#6c6c6c" stroke-width="1"/><path d="M2.200 3.600 h4" stroke="#7a7a7a" stroke-width="1"/></svg>
<svg class="x" style="left:304.2px;top:280.44px" width="8.4" height="10.4"><path d="M.6 9.800h7.200V5l-3.600-4.200L.6 5z" fill="#2b2b2b" stroke="#6c6c6c" stroke-width="1"/><path d="M2.200 6.800 h4" stroke="#7a7a7a" stroke-width="1"/></svg>
<div class="x" style="left:346.32px;top:279.99px;width:1px;height:16px;background:#3f3f3f"></div>
<span class="x c " style="left:314.30px;top:85.45px"><b class="k">import</b> re</span>
<span class="x c " style="left:314.30px;top:101.62px"><b style="color:#9aa2aa">import</b> <span class="g">request</span></span>
<span class="x c g" style="left:314.30px;top:133.96px">#</span>
<svg class="x" style="left:322.58px;top:134.11px" width="12" height="12.4" viewBox="0 0 12.4 12.6"><path d="M1 2l1.5 1.2M.5 5h2v5l1.6-1.3M5 2.6h6M8 1v3M4.6 5.2h7v1.4M6 7l1 .9M5.5 8.6l1 .9M4.5 10.2h7M8.6 6.6v3.6l-3.6 1.8M8.6 10.2l3 1.8" fill="none" stroke="#858585" stroke-width=".95"/></svg>
<svg class="x" style="left:335.03px;top:134.11px" width="12" height="12.4" viewBox="0 0 12.4 12.6"><path d="M.5 1.6h6.3M1.6 1.6v8M5.2 1.6v10M1.6 4.2h3.6M1.6 6.8h3.6M.3 9.9l6.3-1.1M7.2 3h4.4l-4 8.6M7.6 4.6l4.2 7" fill="none" stroke="#858585" stroke-width=".95"/></svg>
<svg class="x" style="left:347.48px;top:134.11px" width="12" height="12.4" viewBox="0 0 12.4 12.6"><path d="M1 2l1.2 1M.5 5l1.2 1M.5 11l1.8-3M3.6 1.6h8M4.2 1.6v6l-1 4M7.6 2l-.5 1.5M5.6 3.6h5v3.8h-5zM5.6 5.5h5M8 7.5v4M6 9l-1 2M10 9l1.5 2" fill="none" stroke="#858585" stroke-width=".95"/></svg>
<svg class="x" style="left:359.93px;top:134.11px" width="12" height="12.4" viewBox="0 0 12.4 12.6"><path d="M.5 2h5M3 2L.5 7M1.6 6.6h3.4v4H1.6zM6.6 2h4v4M7.6 2v4.6h4.4v4l-1.2.7M6 9h4.2" fill="none" stroke="#858585" stroke-width=".95"/></svg>
<span class="x c " style="left:314.30px;top:150.13px"><b class="k">with</b> <span class="bi">open</span>(<span class="s">'imgsorc.txt'</span>,<span class="s">'r'</span>) <b class="k">as</b> f:</span>
<span class="x c " style="left:314.30px;top:166.30px">    html=f.read()</span>
<span class="x c " style="left:314.30px;top:198.64px">pic_url=re.findall(<span class="s">'</span><span style="color:#c9c9c9">&lt;img class="main_img img-hover" s</span></span>
<span class="x c " style="left:314.30px;top:214.81px"><b class="k">for</b> each <b class="k">in</b> pic_url:</span>
<span class="x c " style="left:314.30px;top:230.98px">    <span class="bi">print</span> (<span class="s">'now downloading:'</span>+each)</span>
<span class="x c " style="left:314.30px;top:247.15px">    pic=requests.get(each)</span>
<span class="x c " style="left:314.30px;top:263.32px">    <b class="k">with</b> <span class="bi">open</span>(<span class="s">'pic</span><span class="k">\\</span><span class="s">'</span>+<span class="bi">str</span>(i)+<span class="s">'.jpg'</span>,<span class="s">'wb'</span>) <b class="k">as</b> fp:</span>
<span class="x c " style="left:314.30px;top:279.49px">        fp.write(pic.content)</span>
<svg class="x" style="left:314.3px;top:113.57px" width="46.08" height="3"><path d="M0 .6l1.25 1.5l1.25 -1.5l1.25 1.5l1.25 -1.5l1.25 1.5l1.25 -1.5l1.25 1.5l1.25 -1.5l1.25 1.5l1.25 -1.5l1.25 1.5l1.25 -1.5l1.25 1.5l1.25 -1.5l1.25 1.5l1.25 -1.5l1.25 1.5l1.25 -1.5l1.25 1.5l1.25 -1.5l1.25 1.5l1.25 -1.5l1.25 1.5l1.25 -1.5l1.25 1.5l1.25 -1.5l1.25 1.5l1.25 -1.5l1.25 1.5l1.25 -1.5l1.25 1.5l1.25 -1.5l1.25 1.5l1.25 -1.5l1.25 1.5l1.25 -1.5" fill="none" stroke="#a4a4a4" stroke-width=".95"/></svg>
<svg class="x" style="left:368.06px;top:113.57px" width="53.76" height="3"><path d="M0 .6l1.25 1.5l1.25 -1.5l1.25 1.5l1.25 -1.5l1.25 1.5l1.25 -1.5l1.25 1.5l1.25 -1.5l1.25 1.5l1.25 -1.5l1.25 1.5l1.25 -1.5l1.25 1.5l1.25 -1.5l1.25 1.5l1.25 -1.5l1.25 1.5l1.25 -1.5l1.25 1.5l1.25 -1.5l1.25 1.5l1.25 -1.5l1.25 1.5l1.25 -1.5l1.25 1.5l1.25 -1.5l1.25 1.5l1.25 -1.5l1.25 1.5l1.25 -1.5l1.25 1.5l1.25 -1.5l1.25 1.5l1.25 -1.5l1.25 1.5l1.25 -1.5l1.25 1.5l1.25 -1.5l1.25 1.5l1.25 -1.5l1.25 1.5l1.25 -1.5l1.25 1.5" fill="none" stroke="#c75450" stroke-width=".95"/></svg>
<svg class="x" style="left:314.3px;top:145.91px" width="57.6" height="3"><path d="M0 .6l1.25 1.5l1.25 -1.5l1.25 1.5l1.25 -1.5l1.25 1.5l1.25 -1.5l1.25 1.5l1.25 -1.5l1.25 1.5l1.25 -1.5l1.25 1.5l1.25 -1.5l1.25 1.5l1.25 -1.5l1.25 1.5l1.25 -1.5l1.25 1.5l1.25 -1.5l1.25 1.5l1.25 -1.5l1.25 1.5l1.25 -1.5l1.25 1.5l1.25 -1.5l1.25 1.5l1.25 -1.5l1.25 1.5l1.25 -1.5l1.25 1.5l1.25 -1.5l1.25 1.5l1.25 -1.5l1.25 1.5l1.25 -1.5l1.25 1.5l1.25 -1.5l1.25 1.5l1.25 -1.5l1.25 1.5l1.25 -1.5l1.25 1.5l1.25 -1.5l1.25 1.5l1.25 -1.5l1.25 1.5l1.25 -1.5" fill="none" stroke="#8a8a6a" stroke-width=".95"/></svg>
<svg class="x" style="left:398.78px;top:162.08px" width="53.76" height="3"><path d="M0 .6l1.25 1.5l1.25 -1.5l1.25 1.5l1.25 -1.5l1.25 1.5l1.25 -1.5l1.25 1.5l1.25 -1.5l1.25 1.5l1.25 -1.5l1.25 1.5l1.25 -1.5l1.25 1.5l1.25 -1.5l1.25 1.5l1.25 -1.5l1.25 1.5l1.25 -1.5l1.25 1.5l1.25 -1.5l1.25 1.5l1.25 -1.5l1.25 1.5l1.25 -1.5l1.25 1.5l1.25 -1.5l1.25 1.5l1.25 -1.5l1.25 1.5l1.25 -1.5l1.25 1.5l1.25 -1.5l1.25 1.5l1.25 -1.5l1.25 1.5l1.25 -1.5l1.25 1.5l1.25 -1.5l1.25 1.5l1.25 -1.5l1.25 1.5l1.25 -1.5l1.25 1.5" fill="none" stroke="#8a8a6a" stroke-width=".95"/></svg>
<svg class="x" style="left:498.62px;top:162.08px" width="7.68" height="3"><path d="M0 .6l1.25 1.5l1.25 -1.5l1.25 1.5l1.25 -1.5l1.25 1.5l1.25 -1.5" fill="none" stroke="#b09a4a" stroke-width=".95"/></svg>
<svg class="x" style="left:375.74px;top:178.25px" width="7.68" height="3"><path d="M0 .6l1.25 1.5l1.25 -1.5l1.25 1.5l1.25 -1.5l1.25 1.5l1.25 -1.5" fill="none" stroke="#a4a4a4" stroke-width=".95"/></svg>
<svg class="x" style="left:368.06px;top:210.59px" width="7.68" height="3"><path d="M0 .6l1.25 1.5l1.25 -1.5l1.25 1.5l1.25 -1.5l1.25 1.5l1.25 -1.5" fill="none" stroke="#a4a4a4" stroke-width=".95"/></svg>
<svg class="x" style="left:383.42px;top:242.93px" width="7.68" height="3"><path d="M0 .6l1.25 1.5l1.25 -1.5l1.25 1.5l1.25 -1.5l1.25 1.5l1.25 -1.5" fill="none" stroke="#a4a4a4" stroke-width=".95"/></svg>
<svg class="x" style="left:368.06px;top:259.1px" width="7.68" height="3"><path d="M0 .6l1.25 1.5l1.25 -1.5l1.25 1.5l1.25 -1.5l1.25 1.5l1.25 -1.5" fill="none" stroke="#a4a4a4" stroke-width=".95"/></svg>
<svg class="x" style="left:375.74px;top:259.1px" width="61.44" height="3"><path d="M0 .6l1.25 1.5l1.25 -1.5l1.25 1.5l1.25 -1.5l1.25 1.5l1.25 -1.5l1.25 1.5l1.25 -1.5l1.25 1.5l1.25 -1.5l1.25 1.5l1.25 -1.5l1.25 1.5l1.25 -1.5l1.25 1.5l1.25 -1.5l1.25 1.5l1.25 -1.5l1.25 1.5l1.25 -1.5l1.25 1.5l1.25 -1.5l1.25 1.5l1.25 -1.5l1.25 1.5l1.25 -1.5l1.25 1.5l1.25 -1.5l1.25 1.5l1.25 -1.5l1.25 1.5l1.25 -1.5l1.25 1.5l1.25 -1.5l1.25 1.5l1.25 -1.5l1.25 1.5l1.25 -1.5l1.25 1.5l1.25 -1.5l1.25 1.5l1.25 -1.5l1.25 1.5l1.25 -1.5l1.25 1.5l1.25 -1.5l1.25 1.5l1.25 -1.5l1.25 1.5" fill="none" stroke="#c75450" stroke-width=".95"/></svg>
<svg class="x" style="left:498.62px;top:275.27px" width="7.68" height="3"><path d="M0 .6l1.25 1.5l1.25 -1.5l1.25 1.5l1.25 -1.5l1.25 1.5l1.25 -1.5" fill="none" stroke="#c75450" stroke-width=".95"/></svg>
<svg class="x" style="left:567.74px;top:275.27px" width="7.68" height="3"><path d="M0 .6l1.25 1.5l1.25 -1.5l1.25 1.5l1.25 -1.5l1.25 1.5l1.25 -1.5" fill="none" stroke="#b09a4a" stroke-width=".95"/></svg>
<svg class="x" style="left:529.34px;top:291.44px" width="7.68" height="3"><path d="M0 .6l1.25 1.5l1.25 -1.5l1.25 1.5l1.25 -1.5l1.25 1.5l1.25 -1.5" fill="none" stroke="#a4a4a4" stroke-width=".95"/></svg>
<div class="x" style="left:297px;top:98.2px;width:134.6px;height:20.1px;border:1.6px solid #b52320;border-radius:1.5px"></div>
<svg class="x" style="left:711.2px;top:85.6px" width="7.6" height="7.6"><circle cx="3.7" cy="3.7" r="3.6" fill="#bb2622"/><rect x="3" y="1.5" width="1.4" height="2.8" fill="#7d1815"/><rect x="3" y="5" width="1.4" height="1.2" fill="#7d1815"/></svg>
<div class="x" style="left:709.4px;top:112.05px;width:11.3px;height:1.7px;background:#c4312c"></div>
<div class="x" style="left:709.4px;top:143.95px;width:11.3px;height:1.7px;background:#8f8a6c"></div>
<div class="x" style="left:709.4px;top:160.15px;width:11.3px;height:1.7px;background:#8f8a6c"></div>
<div class="x" style="left:709.4px;top:176.45px;width:11.3px;height:1.7px;background:#8f8a6c"></div>
<div class="x" style="left:709.4px;top:209.45px;width:11.3px;height:1.7px;background:#8f8a6c"></div>
<div class="x" style="left:709.4px;top:241.45px;width:11.3px;height:1.7px;background:#8f8a6c"></div>
<div class="x" style="left:709.4px;top:257.55px;width:11.3px;height:1.7px;background:#c4312c"></div>
<div class="x" style="left:709.4px;top:273.95px;width:11.3px;height:1.7px;background:#c4312c"></div>
<div class="x" style="left:709.4px;top:289.85px;width:11.3px;height:1.7px;background:#8f8a6c"></div>
<div class="x" style="left:313.6px;top:538.4px;width:260.6px;height:7.6px;background:#4a4a4a"></div>
<div class="x" style="left:723.6px;top:188.8px;width:35px;height:35px;background:radial-gradient(circle at 35% 30%,#93dd9b,#68cd78 60%,#5cc46c);border-radius:50%;border:1.8px solid #e3e3e3;box-shadow:0 0 1.6px #777;z-index:5"></div>
<span class="x" style="left:728.00px;top:200.23px;font-size:8.8px;line-height:14px;color:#fff;font-weight:bold;z-index:6;letter-spacing:0.400px">43</span>
<div class="x" style="left:18px;top:546.4px;width:702.6px;height:18.8px;background:linear-gradient(#d0d8e9,#c1c9de);border-top:1px solid #c3cadb"></div>
<span class="x" style="left:21.40px;top:549.91px;font-size:10.2px;line-height:14px;color:#161616;letter-spacing:-1.067px">Run</span>
<svg class="x" style="left:41px;top:549.6px;opacity:.95" width="12" height="12"><path d="M3.6 .6h3.6a1.6 1.6 0 0 1 1.6 1.6v3H4.6a1.6 1.6 0 0 0-1.6 1.6v1.6H1.8A1.4 1.4 0 0 1 .4 7V3.4A2.8 2.8 0 0 1 3.2.6z" fill="#a3bad6"/><path d="M8.8 3.4H10a1.6 1.6 0 0 1 1.6 1.6v3.6a2.8 2.8 0 0 1-2.8 2.8H5.2a1.6 1.6 0 0 1-1.6-1.6v-3h4.2a1.6 1.6 0 0 0 1.6-1.6z" fill="#f1dd97"/></svg>
<span class="x" style="left:55.50px;top:549.91px;font-size:10.2px;line-height:14px;color:#161616;letter-spacing:-0.475px">down_img</span>
<svg class="x" style="left:684.3px;top:550.6px" width="9.4" height="9.4" viewBox="0 0 10 10"><circle cx="5" cy="5" r="2.6" fill="none" stroke="#6b6b6b" stroke-width="1.8"/><path d="M5 .2v9.6M.2 5h9.6M1.6 1.6l6.8 6.8M8.4 1.6l-6.8 6.8" stroke="#6b6b6b" stroke-width="1.3"/><circle cx="5" cy="5" r="1.2" fill="#e6e6e6"/></svg>
<svg class="x" style="left:695.2px;top:554.6px" width="3.8" height="2.6"><path d="M0 0h4l-2 2.4z" fill="#767676"/></svg>
<svg class="x" style="left:706px;top:550px" width="9" height="10.5"><path d="M4.500 1.200v5.400M2.400 4.800l2.100 2.200 2.100-2.200" stroke="#7a7a7a" stroke-width="1" fill="none"/><rect x=".6" y="8.200" width="7.800" height="1.900" fill="#8a8a8a" stroke="#707070" stroke-width=".6"/></svg>
<div class="x" style="left:18px;top:565.2px;width:23.1px;height:200px;background:#e9e9e9;border-right:1px solid #a9a9a9"></div>
<div class="x" style="left:41.1px;top:565.2px;width:22.2px;height:200px;background:#e9e9e9;border-right:1px solid #a9a9a9"></div>
<svg class="x" style="left:23.9px;top:569.7px" width="9" height="11.4" viewBox="0 0 10 12"><path d="M.5 .3l9 5.7-9 5.7z" fill="#3aa53a"/></svg>
<div class="x" style="left:24px;top:590px;width:9px;height:9.3px;background:#9c9c9c"></div>
<div class="x" style="left:24.6px;top:608.8px;width:3px;height:10.2px;background:#b2b2b2"></div>
<div class="x" style="left:29.7px;top:608.8px;width:3px;height:10.2px;background:#b2b2b2"></div>
<div class="x" style="left:21.4px;top:626px;width:16px;height:1px;background:#cfcfcf"></div>
<svg class="x" style="left:23px;top:631.8px" width="11.4" height="11.4"><rect x=".5" y=".5" width="6.2" height="6" fill="#d5e6f7" stroke="#5b8fc4"/><rect x="1.8" y="2.4" width="3.6" height="1.6" fill="#5b8fc4"/><rect x="7.8" y=".5" width="3" height="6" fill="#eee" stroke="#7d7d7d"/><rect x=".5" y="8" width="10.3" height="2.8" fill="#eee" stroke="#7d7d7d"/></svg>
<div class="x" style="left:21.4px;top:650px;width:16px;height:1px;background:#cfcfcf"></div>
<svg class="x" style="left:22.4px;top:656px" width="12" height="12"><path d="M.6 11.4l4-4" stroke="#777" stroke-width="1.1"/><ellipse cx="7.2" cy="5" rx="3" ry="4.300" transform="rotate(45 7.200 5)" fill="#a565c0"/><ellipse cx="7.800" cy="4.400" rx="1.300" ry="2.600" transform="rotate(45 7.800 4.400)" fill="#cba3dd"/><path d="M3.400 4.400l4.400 4.400" stroke="#7d4a96" stroke-width="1.200"/></svg>
<svg class="x" style="left:24px;top:676.5px" width="9" height="9.5"><path d="M.8 .8l7.4 7.9M8.2 .8L.8 8.7" stroke="#df4a3f" stroke-width="1.9" fill="none"/></svg>
<svg class="x" style="left:24.4px;top:695px" width="8" height="11"><path d="M1 3.2A3 2.8 0 1 1 5.6 5.4C4.4 6.2 4 6.6 4 7.8" stroke="#3d97cf" stroke-width="2" fill="none"/><rect x="3" y="9" width="2" height="1.900" fill="#3d97cf"/></svg>
<svg class="x" style="left:47px;top:570.5px" width="9" height="9.6"><path d="M4.5 .2L8.8 4.6H6V9.4H3V4.6H.2z" fill="#4294d4"/></svg>
<svg class="x" style="left:47px;top:589.7px" width="9" height="9.6"><path d="M4.5 9.4L8.8 5H6V.2H3V5H.2z" fill="#4294d4"/></svg>
<svg class="x" style="left:45.8px;top:607.8px" width="11.6" height="11.8"><path d="M1.200 1h9.200M1.200 10.800h9.200" stroke="#bdbdbd" stroke-width="1.300"/><path d="M4 4.400h3.600M4 7.400h3.600" stroke="#7a7a7a" stroke-width="1.200" stroke-dasharray="1.500 .6"/><path d="M2.600 2.600a2.200 2.200 0 0 0 0 4.200M2.600 6.800l-1.200-1.400M2.600 6.800l.2 1.800" stroke="#2f7fc4" stroke-width="1.300" fill="none"/><path d="M9 1.400a2.300 2.300 0 0 1 0 4.400M9 6.400a2.300 2.300 0 0 1 0 4.400M9 10.800l-1.400-1M9 5.800l-1.400-1" stroke="#2f7fc4" stroke-width="1.300" fill="none"/></svg>
<svg class="x" style="left:46px;top:627.4px" width="11.6" height="11.2"><rect x=".5" y="1.400" width="9.800" height="9.200" fill="#e2e2e2" stroke="#8a8a8a"/><rect x=".5" y="1.400" width="9.800" height="2" fill="#9c9c9c"/><path d="M8.200 0v4.400h2.600l-3.700 4-3.700-4h2.600V0z" fill="#a45fc0"/></svg>
<svg class="x" style="left:46px;top:646.4px" width="11.2" height="11.6"><rect x="2.200" y=".4" width="6.800" height="2.600" fill="#ececec" stroke="#8a8a8a" stroke-width=".8"/><rect x=".2" y="1.800" width="10.800" height="5" rx="1" fill="#4696d2"/><rect x="2.600" y="5.600" width="6" height="5.400" fill="#e8e8e8" stroke="#555" stroke-width=".9"/><path d="M5.600 7v3" stroke="#777" stroke-width=".9"/></svg>
<svg class="x" style="left:46.2px;top:665.2px" width="10.8" height="12"><path d="M4 1.200a1.400 1 0 0 1 2.800 0" stroke="#4a5560" stroke-width=".9" fill="none"/><path d="M.3 2.400h10.200" stroke="#4a5560" stroke-width="1.500"/><path d="M1.200 3.600h8.400l-.6 8H1.800z" fill="#4696d2"/><path d="M3.400 4.800v5.600M5.400 4.800v5.600M7.400 4.800v5.600" stroke="#dcebf8" stroke-width=".8"/></svg>
<div class="x" style="left:63.3px;top:565.2px;width:657.3px;height:200px;background:#2b2b2b"></div>
<span class="x co" style="left:73.30px;top:565.80px;color:#bdbdbd">"E:\Program Files (x86)\Python35-32\python.exe" E:/python/reg/down_img.py</span>
<span class="x co" style="left:73.30px;top:580.30px;color:#ee615d">Traceback (most recent call last):</span>
<span class="x co" style="left:73.30px;top:594.90px;color:#ee615d">  File "<span style="color:#3f83e0;text-decoration:underline">E:/python/reg/down_img.py</span>", line 2, in &lt;module&gt;</span>
<span class="x co" style="left:73.30px;top:609.50px;color:#ee615d">    import request</span>
<span class="x co" style="left:73.30px;top:624.10px;color:#ee615d">ImportError: No module named 'request'</span>
<span class="x co" style="left:73.30px;top:653.30px;color:#bdbdbd">Process finished with exit code 1</span>
<div class="x" style="left:66.5px;top:621.4px;width:188.2px;height:21.2px;border:1.4px solid #ad2723"></div>
<div class="x" style="left:1px;top:765px;width:736px;height:18px;background:#ebebeb;border-top:1px solid #c9c9c9"></div>
<div class="x" style="left:15.7px;top:765.8px;width:53.1px;height:16.6px;background:#bcbcbc"></div>
<svg class="x" style="left:23.6px;top:769.9px" width="8.4" height="10.2" viewBox="0 0 10 12"><path d="M.5 .3l9 5.7-9 5.7z" fill="#3aa53a"/></svg>
<span class="x" style="left:36.00px;top:769.13px;font-size:10px;line-height:14px;color:#161616;letter-spacing:-0.633px"><u>4</u>: Run</span>
<svg class="x" style="left:77.6px;top:769.6px" width="10.6" height="10.6"><ellipse cx="4.2" cy="3.4" rx="3.9" ry="3" fill="#f6f6f6" stroke="#6d6d6d" stroke-width=".9"/><path d="M2.4 3h3.6M2.4 4.2h2.6" stroke="#6d6d6d" stroke-width=".6"/><circle cx="7.4" cy="5.2" r="1.7" fill="#f0a64a"/><path d="M4.6 10.4a2.8 3.4 0 0 1 5.6 0z" fill="#4f9ad8"/></svg>
<span class="x" style="left:90.20px;top:769.13px;font-size:10px;line-height:14px;color:#161616;letter-spacing:-0.829px"><u>6</u>: TODO</span>
<svg class="x" style="left:141.6px;top:770px" width="10.6" height="10.6"><path d="M3.2 .4h3.2a1.4 1.4 0 0 1 1.4 1.4v2.6H4a1.4 1.4 0 0 0-1.4 1.4v1.4H1.6A1.2 1.2 0 0 1 .4 6V2.8A2.4 2.4 0 0 1 2.8.4z" fill="#3a78b4"/><path d="M7.8 3H9a1.4 1.4 0 0 1 1.4 1.4v3.2A2.4 2.4 0 0 1 8 10H4.6a1.4 1.4 0 0 1-1.4-1.4V6h3.2A1.4 1.4 0 0 0 7.8 4.600z" fill="#f2c12e"/></svg>
<span class="x" style="left:155.40px;top:769.13px;font-size:10px;line-height:14px;color:#161616;letter-spacing:-0.529px">Python Console</span>
<svg class="x" style="left:236.6px;top:770.4px" width="9.4" height="9.2"><rect x=".5" y=".5" width="8.400" height="8.200" fill="#f4f4f4" stroke="#8f8f8f"/><rect x="1.600" y="2.200" width="6.200" height="5" fill="#b9b9b9"/><path d="M2.6 3.6l1.4 1.1-1.4 1.1M4.8 6h2" stroke="#f4f4f4" stroke-width=".7" fill="none"/></svg>
<span class="x" style="left:249.60px;top:769.13px;font-size:10px;line-height:14px;color:#161616;letter-spacing:-0.425px">Terminal</span>
<span class="x" style="left:674.60px;top:768.93px;font-size:10px;line-height:14px;color:#161616;letter-spacing:-0.622px">Event Log</span>
<div class="x" style="left:1px;top:782.4px;width:736px;height:16.6px;background:#eaeaea;border-top:1px solid #c3c3c3"></div>
<svg class="x" style="left:7.4px;top:785.6px" width="11.6" height="11.2"><rect x=".6" y=".6" width="10.400" height="8.200" fill="#dcdcdc" stroke="#737373" stroke-width="1.100"/><rect x="2" y="2" width="7.600" height="5.400" fill="#c2c2c2"/><path d="M.4 10.500h10.800" stroke="#737373" stroke-width="1.200"/></svg>
<span class="x" style="left:601.20px;top:785.83px;font-size:10px;line-height:14px;color:#222;letter-spacing:-0.175px">5:39</span>
<span class="x" style="left:628.20px;top:785.83px;font-size:10px;line-height:14px;color:#222;letter-spacing:-1.000px">CRLF</span>
<svg class="x" style="left:650.6px;top:788.4px" width="3.6" height="7"><path d="M0 2.8L1.8 .4 3.6 2.800zM0 4.200L1.800 6.600 3.600 4.200z" fill="#555"/></svg>
<span class="x" style="left:663.20px;top:785.83px;font-size:10px;line-height:14px;color:#222;letter-spacing:-0.320px">UTF-8</span>
<svg class="x" style="left:690.2px;top:788.4px" width="3.6" height="7"><path d="M0 2.8L1.8 .4 3.6 2.800zM0 4.200L1.800 6.600 3.600 4.200z" fill="#555"/></svg>
<svg class="x" style="left:703.4px;top:786.4px" width="8.6" height="10"><path d="M4.600 4.400V2.600a1.700 1.700 0 0 0-3.400 0" fill="none" stroke="#8a8a8a" stroke-width="1"/><rect x="2.6" y="4.400" width="5.400" height="4.800" fill="#eee" stroke="#8a8a8a" stroke-width=".9"/></svg>
<svg class="x" style="left:721.6px;top:785.4px" width="9.4" height="12"><ellipse cx="4.700" cy="4.200" rx="3.300" ry="3.800" fill="#e2e2e2" stroke="#7f7f7f" stroke-width=".9"/><path d="M1.400 4h6.600" stroke="#7f7f7f" stroke-width=".8"/><path d="M.6 11.400a4.100 3.400 0 0 1 8.200 0z" fill="#d6d6d6" stroke="#7f7f7f" stroke-width=".8"/></svg>
<div class="x" style="left:0px;top:24px;width:1px;height:776px;background:#a8a5de"></div>
<div class="x" style="left:737px;top:24px;width:1px;height:776px;background:#a8a5de"></div>
<div class="x" style="left:0px;top:799px;width:738px;height:1px;background:#a8a5de"></div>
<div class="x" style="left:606px;top:705px;width:132px;height:18.8px;background:linear-gradient(#ffffff 55%,#eaf0f9);border-radius:2px 0 0 2px"></div>
<svg class="x" style="left:594.6px;top:702.4px" width="23" height="22.6"><g transform="rotate(-11 11.500 11.300)"><rect x="2.200" y="2.400" width="18.600" height="17.800" rx="2.200" fill="#f1561d"/><path d="M17 7.400C14 5.400 6 5.600 6 8.800c0 3.200 11.400 1.600 11.400 5.200 0 3.200-8.400 3.200-11.600 1" fill="none" stroke="#fff" stroke-width="2.900" stroke-linecap="round"/></g></svg>
<svg class="x" style="left:621.4px;top:708.4px" width="12" height="12.4"><path d="M.6 2.400h10.800M3.600 .4v3.800M8.400 .4v3.800M2.400 5.400h7.200v3.200M2.400 5.400v3.200M.4 8.600h11.200M6 4.600v4c0 1.400-1.600 2.800-5.200 3.400M6.400 9c.8 1.400 2.400 2.600 5.200 3" fill="none" stroke="#2468c6" stroke-width="1.750"/></svg>
<svg class="x" style="left:638.8px;top:709.5px" width="11.6" height="11.2" viewBox="0 0 11.400 12"><path d="M7.400 .4A6 6 0 1 1 .6 9.200 6.600 6.600 0 0 0 7.400 .4z" fill="#2468c6"/></svg>
<svg class="x" style="left:656.8px;top:710.4px" width="8.6" height="9"><circle cx="1.500" cy="1.600" r="1.350" fill="#2468c6"/><path d="M5.800 2.600a1.700 1.700 0 0 1 1.900 1.800c0 1.800-1.200 3.200-3 3.800 1-.8 1.400-1.600 1.200-2.300a1.700 1.700 0 0 1-.1-3.300z" fill="#2468c6"/></svg>
<svg class="x" style="left:672px;top:709.8px" width="11.8" height="9"><rect x=".3" y=".3" width="11.200" height="8.400" rx="1" fill="#2468c6"/><path d="M1.800 2.400h8.200M1.800 4.400h8.200" stroke="#fff" stroke-width="1" stroke-dasharray="1.200 .9"/><path d="M3 6.600h5.800" stroke="#fff" stroke-width="1"/></svg>
<svg class="x" style="left:690px;top:708.2px" width="13.4" height="13"><circle cx="5" cy="3" r="2.700" fill="#2468c6"/><path d="M.4 11.400a4.600 5 0 0 1 9.200 0z" fill="#2468c6"/><rect x="6.400" y="7.400" width="6.600" height="5" rx=".8" fill="#2468c6" stroke="#fff" stroke-width=".7"/><path d="M8.400 8.600v2.600M10 8.800h1.600v2.200H10z" stroke="#fff" stroke-width=".6" fill="none"/></svg>
<svg class="x" style="left:706px;top:709px" width="11.4" height="11"><path d="M3.400 .4L.2 2.800l1.600 2.400 1.200-.8v6.200h5.400V4.400l1.200.8 1.600-2.400L8 .4C7.400 1.600 4 1.600 3.400 .4z" fill="#2468c6"/></svg>
<svg class="x" style="left:723px;top:708.6px" width="11.4" height="11.8"><path d="M10.800 2.600L8.600 4.800 6.800 3l2.200-2.200a3.400 3.400 0 0 0-4.200 4.400L.6 9.400a1.300 1.300 0 0 0 1.800 1.800l4.200-4.200a3.400 3.400 0 0 0 4.200-4.400z" fill="#2468c6"/></svg>
<div class="x" style="left:647px;top:771.2px;width:29px;height:18.4px;background:radial-gradient(ellipse at 50% 40%,#f0333a,#d9161f);border-radius:50%"></div>
<span class="x" style="left:650.20px;top:773.10px;font-size:13.8px;line-height:16px;color:#fff;font-weight:bold;font-style:italic;letter-spacing:-0.933px">php</span>
<svg class="x" style="left:678.6px;top:771.8px;transform:skewX(-7deg)" width="15.6" height="16.4" viewBox="0 0 14.400 16"><path d="M1 4.400h12v6H1zM7 .6v14.800" fill="none" stroke="#fff" stroke-width="3.600" stroke-linejoin="round" opacity=".9"/><path d="M1 4.400h12v6H1zM7 .6v14.800" fill="none" stroke="#1d1d1d" stroke-width="1.900"/></svg>
<svg class="x" style="left:695.4px;top:771.8px;transform:skewX(-7deg)" width="15.6" height="16.4" viewBox="0 0 14.400 16"><path d="M6.600 .6l1.400 2.200M.6 4.200h13.200M3.400 4.600c1.600 5 5 8.200 10.400 10M10.800 4.600c-1.600 5-5 8.200-10.400 10" fill="none" stroke="#fff" stroke-width="3.600" stroke-linejoin="round" opacity=".9"/><path d="M6.600 .6l1.400 2.200M.6 4.200h13.200M3.400 4.600c1.600 5 5 8.200 10.400 10M10.800 4.600c-1.600 5-5 8.200-10.400 10" fill="none" stroke="#1d1d1d" stroke-width="1.900"/></svg>
<svg class="x" style="left:712.2px;top:771.8px;transform:skewX(-7deg)" width="15.6" height="16.4" viewBox="0 0 14.400 16"><path d="M1.200 15V1.400h12v12c0 1-.6 1.400-2.200 1.400M3.400 4.200l3.200 6M6.600 4.200l-3.200 6M7.800 4.200l3.200 6M11 4.200l-3.200 6" fill="none" stroke="#fff" stroke-width="3.600" stroke-linejoin="round" opacity=".9"/><path d="M1.200 15V1.400h12v12c0 1-.6 1.400-2.200 1.400M3.400 4.200l3.200 6M6.600 4.200l-3.200 6M7.800 4.200l3.200 6M11 4.200l-3.200 6" fill="none" stroke="#1d1d1d" stroke-width="1.900"/></svg>
<svg class="x" style="left:712.2px;top:771.8px;transform:skewX(-7deg)" width="15.6" height="16.4" viewBox="0 0 14.400 16"><path d="M3.600 4.600l2.800 6.400M6.400 4.600l-2.800 6.400M8 4.600l2.800 6.400M10.800 4.600L8 11" fill="none" stroke="#1d1d1d" stroke-width="1.250"/></svg>
</body>
</html>
